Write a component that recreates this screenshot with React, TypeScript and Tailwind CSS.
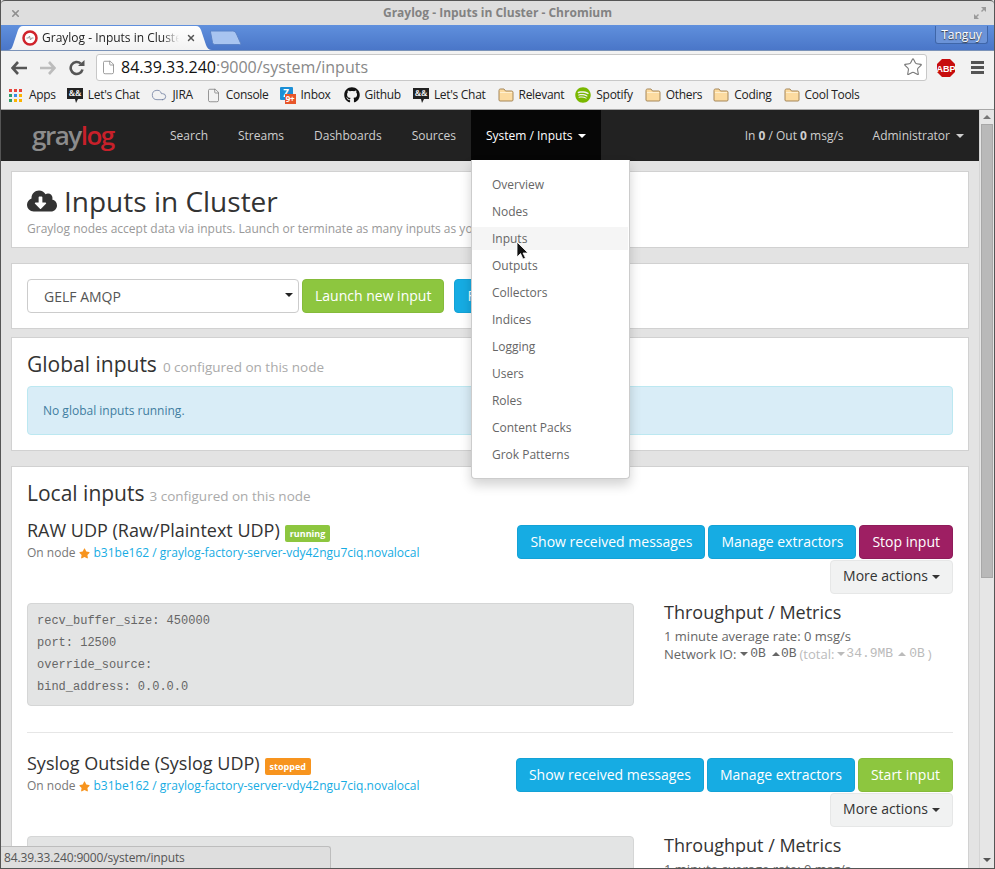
import { FaCloudDownloadAlt, FaStar, FaGithub, FaSpotify } from "react-icons/fa";
import { Star, File, Cloud, X } from "lucide-react";

const font = { fontFamily: '"Open Sans", sans-serif' };
const mono = { fontFamily: '"Liberation Mono", monospace' };

const Caret = ({ up, className }: { up?: boolean; className?: string }) => (
  <span
    className={`inline-block w-0 h-0 border-x-[4px] border-x-transparent align-middle ${
      up ? "border-b-[4px] border-b-current" : "border-t-[4px] border-t-current"
    } ${className ?? ""}`}
  />
);

const FolderIcon = () => (
  <svg width="16" height="14" viewBox="0 0 16 14" className="shrink-0">
    <path
      d="M1 12V2.5C1 1.7 1.5 1 2.3 1H6l1.5 2h6.2c.8 0 1.3.6 1.3 1.3V12c0 .6-.5 1-1 1H2c-.6 0-1-.4-1-1z"
      fill="#fcdba0"
      stroke="#a5875a"
    />
    <path d="M2 4.5h12" stroke="#fff0d0" />
  </svg>
);

const ChatIcon = () => (
  <svg width="16" height="17" viewBox="0 0 16 17" className="shrink-0">
    <path d="M0 1h16v11h-5l-2 4-1-4H0z" fill="#222" />
    <text x="8" y="9" fontSize="8" fontWeight="700" fontFamily="Liberation Serif" fill="#fff" textAnchor="middle">
      &amp;&amp;
    </text>
  </svg>
);

const AppsIcon = () => {
  const colors = ["#e8453c", "#e8453c", "#e8453c", "#2e9e6b", "#3b8de8", "#fbb400", "#2e9e6b", "#fbb400", "#fbb400"];
  return (
    <div className="grid grid-cols-3 gap-[2px] w-[13px] shrink-0 mr-[2px]">
      {colors.map((c, i) => (
        <span key={i} className="w-[3px] h-[3px]" style={{ backgroundColor: c }} />
      ))}
    </div>
  );
};

const InboxIcon = () => (
  <div className="relative w-[16px] h-[17px] shrink-0">
    <div className="w-[13px] h-[13px] bg-[#1c8fd6] rounded-[1px] text-white text-[10px] font-bold leading-[12px] text-center">Z</div>
    <div className="absolute right-0 bottom-0 w-[11px] h-[10px] bg-[#e8562a] text-white text-[8px] font-bold leading-[10px] text-center">9+</div>
  </div>
);

const Bookmark = ({ icon, label, ml }: { icon: React.ReactNode; label: string; ml: string }) => (
  <div className={`flex items-center gap-[5px] shrink-0 ${ml}`}>
    {icon}
    <span>{label}</span>
  </div>
);

const ChromeBar = () => (
  <div className="shrink-0" style={font}>
    {/* title bar */}
    <div className="h-[25px] bg-[#dedede] flex items-center justify-between pl-[9px] pr-[8px] border-t border-t-[#555] rounded-t-[4px]">
      <X size={11} strokeWidth={3.5} className="text-[#8f8f8f]" />
      <span className="text-[12px] font-bold text-[#828282]">Graylog - Inputs in Cluster - Chromium</span>
      <svg width="12" height="12" viewBox="0 0 12 12" className="text-[#9a9a9a]">
        <path d="M7 0h5v5L10 3 8 5 7 4l2-2zM0 7l2 2 2-2 1 1-2 2 2 2H0z" fill="currentColor" />
      </svg>
    </div>
    {/* tab strip */}
    <div className="h-[25px] bg-gradient-to-b from-[#6090dd] to-[#4a76c8] flex items-end pl-[7px] pr-[6px]">
      <div className="relative w-[204px] h-[24px] flex items-center pl-[14px] pr-[12px]">
        <svg width="204" height="24" viewBox="0 0 204 24" className="absolute left-0 top-0">
          <defs>
            <linearGradient id="tabfill" x1="0" y1="0" x2="0" y2="1">
              <stop offset="0" stopColor="#ffffff" />
              <stop offset="1" stopColor="#f2f2f2" />
            </linearGradient>
          </defs>
          <path d="M0 24c3 0 4-2 5-5l5-15c1-2 2-4 5-4h173c3 0 4 2 5 4l5 15c1 3 3 5 6 5z" fill="url(#tabfill)" />
        </svg>
        <svg width="16" height="16" viewBox="0 0 16 16" className="relative shrink-0">
          <circle cx="8" cy="8" r="6.5" fill="#fff" stroke="#d0232b" strokeWidth="2.5" />
          <path d="M4.5 8h2l1-2 1 4 1-2h2" fill="none" stroke="#999" strokeWidth="1" />
        </svg>
        <span className="relative ml-[4px] w-[137px] overflow-hidden whitespace-nowrap text-[12px] text-[#222] [mask-image:linear-gradient(to_right,black_88%,transparent)]">
          Graylog - Inputs in Cluster
        </span>
        <X size={10} strokeWidth={3.5} className="relative ml-[7px] text-[#555]" />
      </div>
      <svg width="32" height="15" viewBox="0 0 32 15" className="mb-[5px] -ml-[2px]">
        <path d="M.5 1h22c2 0 3 1 4 3l4 9c.5 1 0 1.500-1 1.500H5c-1 0-2-.5-2.500-2L.5 2z" fill="#a8c4f0" stroke="#5b82c6" />
      </svg>
      <div className="ml-auto mb-[6px] w-[53px] h-[18px] border border-[#3f66a8] border-t-0 rounded-b-[3px] bg-[#6b93d8] text-[12px] leading-[17px] text-white text-center [text-shadow:0_1px_1px_#333]">
        Tanguy
      </div>
    </div>
    {/* toolbar */}
    <div className="h-[34px] bg-[#f2f2f2] border-t border-t-[#7b93b8] flex items-center pl-[10px] pr-[10px]">
      <svg width="16" height="14" viewBox="0 0 16 14" className="shrink-0">
        <path d="M7 1 1.500 7 7 13M2 7h14" fill="none" stroke="#555" strokeWidth="2.600" />
      </svg>
      <svg width="16" height="14" viewBox="0 0 16 14" className="shrink-0 ml-[13px]">
        <path d="M9 1l5.500 6L9 13M14 7H0" fill="none" stroke="#bcbcbc" strokeWidth="2.600" />
      </svg>
      <svg width="16" height="16" viewBox="0 0 16 16" className="shrink-0 ml-[13px]">
        <path d="M13.500 9.500A6 6 0 1 1 11.800 3.600" fill="none" stroke="#555" strokeWidth="2.600" />
        <path d="M9 6h6.500V0z" fill="#555" />
      </svg>
      <div className="ml-[11px] flex-1 h-[27px] bg-white border border-[#c8c8c8] rounded-[3px] flex items-center pl-[4px] pr-[3px] pb-[1px]">
        <File size={15} strokeWidth={1.3} className="text-[#888] shrink-0" />
        <span className="ml-[5px] text-[16px] text-[#111]">84.39.33.240</span>
        <span className="text-[16px] text-[#888]">:9000/system/inputs</span>
        <Star size={20} strokeWidth={1.3} className="ml-auto text-[#777]" />
      </div>
      <svg width="20" height="20" viewBox="0 0 20 20" className="ml-[9px] shrink-0">
        <path d="M6 1h8l5 5v8l-5 5H6l-5-5V6z" fill="#c70d0d" />
        <text x="10" y="13.500" textAnchor="middle" fontSize="9" fontWeight="700" fontFamily="Liberation Sans" fill="#fff">
          ABP
        </text>
      </svg>
      <div className="ml-[15px] w-[13px] flex flex-col gap-[2px] shrink-0">
        <span className="h-[3px] bg-[#555]" />
        <span className="h-[3px] bg-[#555]" />
        <span className="h-[3px] bg-[#555]" />
      </div>
    </div>
    {/* bookmarks */}
    <div className="h-[26px] bg-[#f2f2f2] border-b border-b-[#a8a8a8] flex items-center pl-[8px] pb-[3px] text-[12px] tracking-[-0.3px] text-[#222] whitespace-nowrap overflow-hidden">
      <Bookmark icon={<AppsIcon />} label="Apps" ml="" />
      <Bookmark icon={<ChatIcon />} label="Let's Chat" ml="ml-[11px]" />
      <Bookmark icon={<Cloud size={16} strokeWidth={1.2} className="text-[#6f7ea0]" />} label="JIRA" ml="ml-[12px]" />
      <Bookmark icon={<File size={15} strokeWidth={1.2} className="text-[#777]" />} label="Console" ml="ml-[13px]" />
      <Bookmark icon={<InboxIcon />} label="Inbox" ml="ml-[11px]" />
      <Bookmark icon={<FaGithub size={16} className="text-[#111]" />} label="Github" ml="ml-[13px]" />
      <Bookmark icon={<ChatIcon />} label="Let's Chat" ml="ml-[12px]" />
      <Bookmark icon={<FolderIcon />} label="Relevant" ml="ml-[12px]" />
      <Bookmark icon={<FaSpotify size={16} className="text-[#7ab800]" />} label="Spotify" ml="ml-[11px]" />
      <Bookmark icon={<FolderIcon />} label="Others" ml="ml-[12px]" />
      <Bookmark icon={<FolderIcon />} label="Coding" ml="ml-[11px]" />
      <Bookmark icon={<FolderIcon />} label="Cool Tools" ml="ml-[12px]" />
    </div>
  </div>
);

const navLinks = ["Search", "Streams", "Dashboards", "Sources"];
const menuItems = ["Overview", "Nodes", "Inputs", "Outputs", "Collectors", "Indices", "Logging", "Users", "Roles", "Content Packs", "Grok Patterns"];

const Navbar = () => (
  <div className="relative h-[51px] shrink-0 bg-[#222] flex text-[12px] text-[#cfcfcf]">
    <div className="w-[154px] pl-[31px] flex items-center">
      <span className="text-[26px] font-semibold tracking-[-1.5px] leading-none pb-[2px]">
        <span className="text-[#8c8c8c]">gray</span>
        <span className="text-[#c8202a]">log</span>
      </span>
    </div>
    <div className="flex h-[50px]">
      {navLinks.map((l) => (
        <div key={l} className="px-[15px] pt-[1px] flex items-center">
          {l}
        </div>
      ))}
      <div className="relative px-[15px] pt-[1px] flex items-center bg-[#060606] text-white gap-[6px]">
        System / Inputs <Caret />
        <Menu />
      </div>
    </div>
    <div className="ml-auto flex items-center pr-[15px] pt-[1px] h-[50px]">
      <span>
        In <b>0</b> / Out <b>0</b> msg/s
      </span>
      <span className="ml-[29px] flex items-center gap-[6px]">
        Administrator <Caret />
      </span>
    </div>
  </div>
);

const Menu = () => (
  <div className="absolute z-20 left-0 top-[50px] w-[159px] h-[319px] bg-white border border-[#ccc] border-t-0 rounded-b-[4px] shadow-[0_6px_12px_rgba(0,0,0,0.175)] pt-[13px] pr-[1px] flex flex-col gap-[4px] text-[12px] text-[#666]">
    {menuItems.map((m) => (
      <div key={m} className={`relative h-[23px] leading-[23px] pl-[20px] ${m === "Inputs" ? "bg-[#f5f5f5]" : ""}`}>
        {m}
        {m === "Inputs" && (
          <svg width="14" height="20" viewBox="0 0 14 20" className="absolute left-[44px] top-[14px] z-30">
            <path d="M1 1v15l3.500-3.500L7 18l2.500-1-2.500-5h5z" fill="#111" stroke="#fff" strokeWidth="0.8" />
          </svg>
        )}
      </div>
    ))}
  </div>
);

const Panel = ({ className, children }: { className?: string; children: React.ReactNode }) => (
  <div className={`bg-white border border-[#d1d1d1] px-[15px] ${className ?? ""}`}>{children}</div>
);

const Btn = ({ color, children, className }: { color: string; children: React.ReactNode; className?: string }) => (
  <div className={`h-[34px] px-[12px] rounded-[4px] border text-white text-[14px] leading-[32px] whitespace-nowrap ${color} ${className ?? ""}`}>
    {children}
  </div>
);

const InputRow = ({
  title,
  badge,
  badgeColor,
  action,
  actionColor,
}: {
  title: string;
  badge: string;
  badgeColor: string;
  action: string;
  actionColor: string;
}) => (
  <div>
    <div className="flex justify-between">
      <div>
        <div className="flex items-center h-[24px] -mt-[7px]">
          <span className="text-[18px] text-[#333]">{title}</span>
          <span className={`ml-[5px] mt-[6px] h-[17px] px-[5px] rounded-[2px] text-white text-[9px] font-bold leading-[17px] ${badgeColor}`}>{badge}</span>
        </div>
        <div className="text-[12px] text-[#777] mt-[2px] flex items-center">
          On node <FaStar size={11} className="text-[#f7941e] ml-[4px] mr-[3px]" />
          <span className="text-[#16ace3]">b31be162 / graylog-factory-server-vdy42ngu7ciq.novalocal</span>
        </div>
      </div>
      <div className="flex flex-col items-end gap-[1px]">
        <div className="flex gap-[3px]">
          <Btn color="bg-[#16ace3] border-[#13a2d6]">Show received messages</Btn>
          <Btn color="bg-[#16ace3] border-[#13a2d6]">Manage extractors</Btn>
          <Btn color={actionColor}>{action}</Btn>
        </div>
        <div className="h-[34px] px-[12px] pb-[4px] rounded-[4px] border border-[#e6e7e7] bg-[#f1f2f2] text-[14px] text-[#333] flex items-center gap-[4px]">
          More actions <Caret className="mt-[3px]" />
        </div>
      </div>
    </div>
    <div className="flex mt-[9px]">
      <div className="w-[607px] h-[103px] shrink-0 bg-[#e3e4e4] border border-[#d5d6d6] rounded-[4px] pl-[9px] pt-[6px] text-[12px] leading-[22px] text-[#666]" style={mono}>
        <div>recv_buffer_size: 450000</div>
        <div>port: 12500</div>
        <div>override_source:</div>
        <div>bind_address: 0.0.0.0</div>
      </div>
      <div className="ml-[30px] -mt-[1px]">
        <div className="text-[18px] leading-[20px] text-[#333]">Throughput / Metrics</div>
        <div className="text-[13px] text-[#666] leading-[18px] mt-[5px]">1 minute average rate: 0 msg/s</div>
        <div className="text-[13px] text-[#666] leading-[18px] flex items-center whitespace-nowrap">
          Network IO:
          <Caret className="ml-[4px] mr-[2px]" />
          <span style={mono}>0B</span>
          <Caret up className="ml-[6px] mr-[1px]" />
          <span style={mono}>0B</span>
          <span className="flex items-center text-[#bbb] ml-[3px]">
            (total:
            <Caret className="ml-[3px] mr-[1px]" />
            <span style={mono}>34.9MB</span>
            <Caret up className="ml-[5px] mr-[3px]" />
            <span style={mono}>0B</span>
            <span className="ml-[3px]">)</span>
          </span>
        </div>
      </div>
    </div>
  </div>
);

const Scrollbar = () => (
  <div className="w-[15px] shrink-0 bg-[#e6e6e6] border-l border-l-[#d4d4d4] flex flex-col items-center">
    <Caret up className="mt-[5px] text-[#777]" />
    <div className="w-[12px] h-[454px] bg-[#b9b9b9] border border-[#a8a8a8] mt-[5px]" />
    <Caret className="mt-auto mb-[6px] text-[#555]" />
  </div>
);

export default function App() {
  return (
    <div className="relative w-[995px] h-[869px] overflow-hidden flex flex-col bg-[#e3e3e3] border-x border-b border-[#555]" style={font}>
      <ChromeBar />
      <div className="flex-1 flex min-h-0">
        <div className="flex-1 min-w-0 overflow-hidden flex flex-col">
          <Navbar />
          <div className="pl-[10px] pr-[10px] pt-[10px]">
            <Panel className="h-[77px]">
              <div className="flex items-center gap-[7px] mt-[9px] h-[40px]">
                <FaCloudDownloadAlt size={30} className="text-[#333]" />
                <span className="text-[28px] leading-[40px] text-[#333]">Inputs in Cluster</span>
              </div>
              <div className="text-[12px] text-[#999] leading-[16px] whitespace-nowrap">
                Graylog nodes accept data via inputs. Launch or terminate as many inputs as you want here.
              </div>
            </Panel>
            <Panel className="h-[66px] mt-[15px] flex items-center">
              <div className="relative w-[272px] h-[34px] border border-[#ccc] rounded-[4px] bg-white pl-[16px] text-[14px] leading-[34px] text-[#555]">
                GELF AMQP
                <Caret className="absolute right-[5px] top-[13px] text-[#222]" />
              </div>
              <Btn color="bg-[#8dc63f] border-[#85bb3a]" className="ml-[3px]">Launch new input</Btn>
              <Btn color="bg-[#16ace3] border-[#13a2d6]" className="ml-[10px]">Find more inputs</Btn>
            </Panel>
            <Panel className="h-[114px] mt-[8px]">
              <div className="flex items-baseline mt-[11px] h-[30px]">
                <span className="text-[21px] leading-[30px] text-[#333]">Global inputs</span>
                <span className="ml-[6px] text-[13.500px] text-[#aaa]">0 configured on this node</span>
              </div>
              <div className="mt-[7px] h-[49px] bg-[#d9edf7] border border-[#bce8f1] rounded-[4px] pl-[15px] text-[12px] leading-[47px] text-[#3f7da0]">
                No global inputs running.
              </div>
            </Panel>
            <Panel className="h-[500px] mt-[15px]">
              <div className="flex items-baseline mt-[11px] h-[30px] mb-[17px]">
                <span className="text-[21px] leading-[30px] text-[#333]">Local inputs</span>
                <span className="ml-[5px] text-[13.500px] text-[#aaa]">3 configured on this node</span>
              </div>
              <InputRow title="RAW UDP (Raw/Plaintext UDP)" badge="running" badgeColor="bg-[#8dc63f]" action="Stop input" actionColor="bg-[#9e1f63] border-[#8f1c5a]" />
              <div className="border-t border-t-[#e6e6e6] mt-[26px] mb-[25px]" />
              <InputRow title="Syslog Outside (Syslog UDP)" badge="stopped" badgeColor="bg-[#f7941e]" action="Start input" actionColor="bg-[#8dc63f] border-[#85bb3a]" />
            </Panel>
          </div>
        </div>
        <Scrollbar />
      </div>
      <div className="absolute left-0 bottom-0 w-[330px] h-[22px] bg-[#dedede] border-t border-r border-[#bdbdbd] rounded-tr-[3px] pl-[3px] text-[12px] tracking-[-0.15px] leading-[21px] text-[#555]">
        84.39.33.240:9000/system/inputs
      </div>
    </div>
  );
}
